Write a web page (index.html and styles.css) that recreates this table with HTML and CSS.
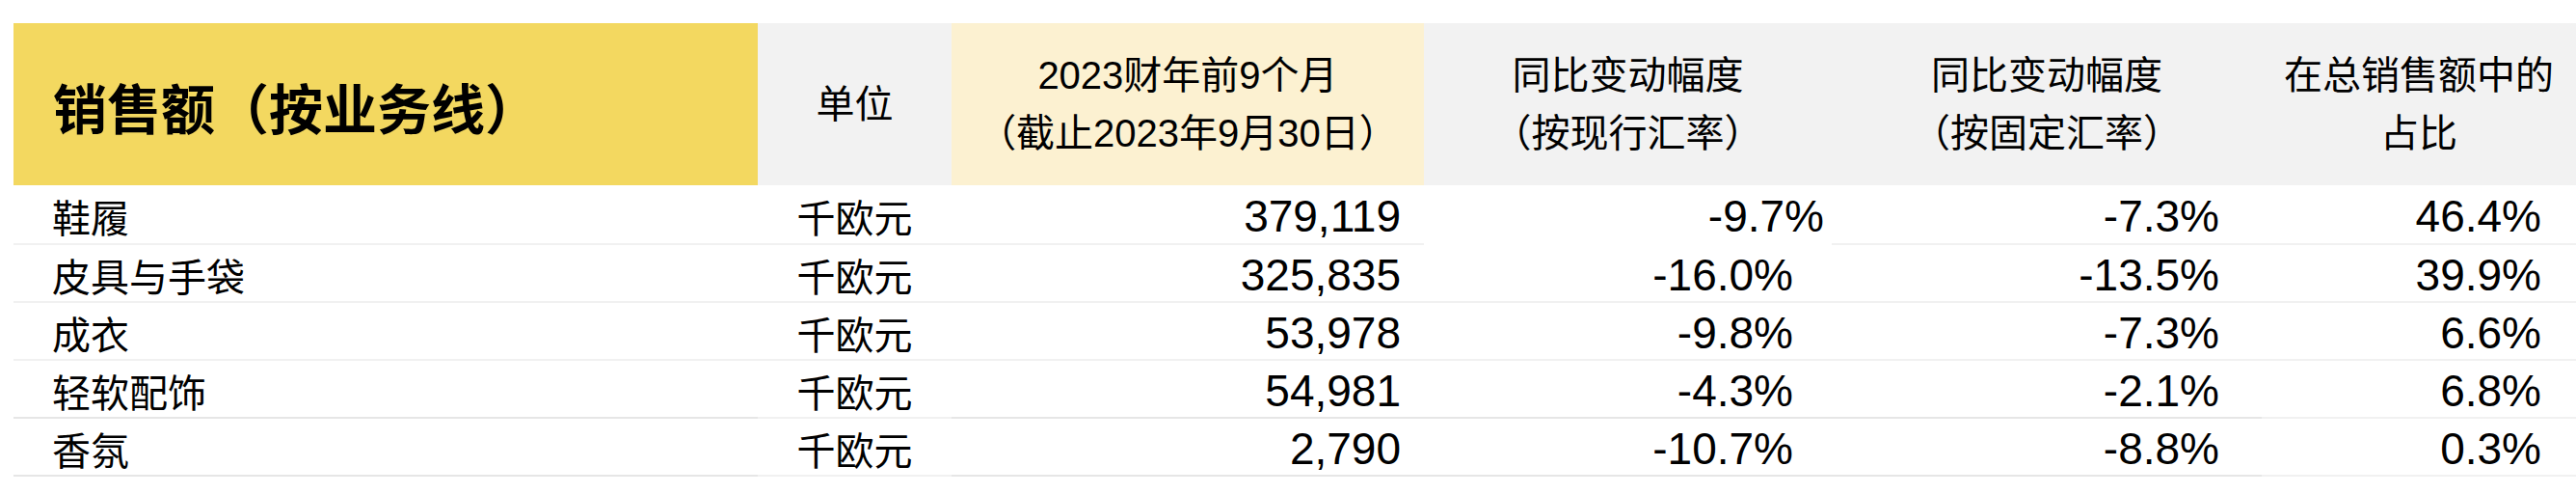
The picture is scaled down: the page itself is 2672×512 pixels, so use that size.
FILE: index.html
```html
<!DOCTYPE html>
<html lang="zh-CN">
<head>
<meta charset="utf-8">
<title>销售额（按业务线）</title>
<link rel="stylesheet" href="styles.css">
</head>
<body>
<table class="sales">
  <colgroup>
    <col class="c-name"><col class="c-unit"><col class="c-val"><col class="c-cur"><col class="c-fix"><col class="c-share">
  </colgroup>
  <thead>
    <tr>
      <th class="h-title">销售额（按业务线）</th>
      <th class="h-gray">单位</th>
      <th class="h-gold">2023财年前9个月<br>（截止2023年9月30日）</th>
      <th class="h-gray">同比变动幅度<br>（按现行汇率）</th>
      <th class="h-gray">同比变动幅度<br>（按固定汇率）</th>
      <th class="h-gray">在总销售额中的<br>占比</th>
    </tr>
  </thead>
  <tbody>
    <tr class="first">
      <td class="name">鞋履</td><td class="unit">千欧元</td><td class="num val">379,119</td><td class="num cur cur-first">-9.7%</td><td class="num fix">-7.3%</td><td class="num share">46.4%</td>
    </tr>
    <tr>
      <td class="name">皮具与手袋</td><td class="unit">千欧元</td><td class="num val">325,835</td><td class="num cur">-16.0%</td><td class="num fix">-13.5%</td><td class="num share">39.9%</td>
    </tr>
    <tr>
      <td class="name">成衣</td><td class="unit">千欧元</td><td class="num val">53,978</td><td class="num cur">-9.8%</td><td class="num fix">-7.3%</td><td class="num share">6.6%</td>
    </tr>
    <tr class="dark">
      <td class="name">轻软配饰</td><td class="unit">千欧元</td><td class="num val">54,981</td><td class="num cur">-4.3%</td><td class="num fix">-2.1%</td><td class="num share">6.8%</td>
    </tr>
    <tr class="dark">
      <td class="name">香氛</td><td class="unit">千欧元</td><td class="num val">2,790</td><td class="num cur">-10.7%</td><td class="num fix">-8.8%</td><td class="num share">0.3%</td>
    </tr>
  </tbody>
</table>
</body>
</html>
```

FILE: styles.css
```css
html, body {
  margin: 0;
  padding: 0;
  background: #ffffff;
}
body {
  padding: 24px 0 0 14px;
  font-family: "Liberation Sans", "Noto Sans CJK SC", sans-serif;
  color: #000;
  overflow: hidden;
}
.sales {
  border-collapse: separate;
  border-spacing: 0;
  width: 2658px;
  table-layout: fixed;
}
.c-name { width: 772px; }
.c-unit { width: 201px; }
.c-val { width: 490px; }
.c-cur { width: 423px; }
.c-fix { width: 446px; }
.c-share { width: 326px; }

.sales th {
  height: 168px;
  padding: 0;
  box-sizing: border-box;
  font-weight: normal;
  font-size: 40px;
  line-height: 60px;
  text-align: center;
  vertical-align: middle;
  font-family: "Liberation Sans", "Noto Sans CJK SC", sans-serif;
}
.sales th.h-title {
  background: #f3d860;
  text-align: left;
  padding-left: 41px;
  font-family: "Noto Sans CJK SC", sans-serif;
  font-weight: bold;
  font-size: 56px;
  padding-top: 4px;
}
.h-gray { background: #f2f2f2; }
.h-gold { background: #fcf1d1; }

.sales td {
  height: 58px;
  padding: 4px 0 0 0;
  box-sizing: content-box;
  border-bottom: 2px solid #f1f1f1;
  font-size: 40px;
  line-height: 54px;
  vertical-align: middle;
  white-space: nowrap;
}
.sales tr.first td { height: 56px; padding-top: 4px; }
.sales td { height: 54px; }
.sales tr.first td { height: 56px; }

.name {
  padding-left: 40px !important;
  font-family: "Noto Sans CJK SC", sans-serif;
}
.unit {
  text-align: center;
  font-family: "Noto Sans CJK SC", sans-serif;
}
.num {
  text-align: right;
  font-size: 46px !important;
  font-family: "Liberation Sans", sans-serif;
}
.val { padding-right: 24px !important; }
.cur { padding-right: 40px !important; }
.cur-first { padding-right: 8px !important; border-bottom-color: transparent !important; }
.fix { padding-right: 44px !important; }
.share { padding-right: 36px !important; }

.sales tr.dark td.name,
.sales tr.dark td.val,
.sales tr.dark td.cur,
.sales tr.dark td.fix { border-bottom-color: #e6e6e6; }
```
